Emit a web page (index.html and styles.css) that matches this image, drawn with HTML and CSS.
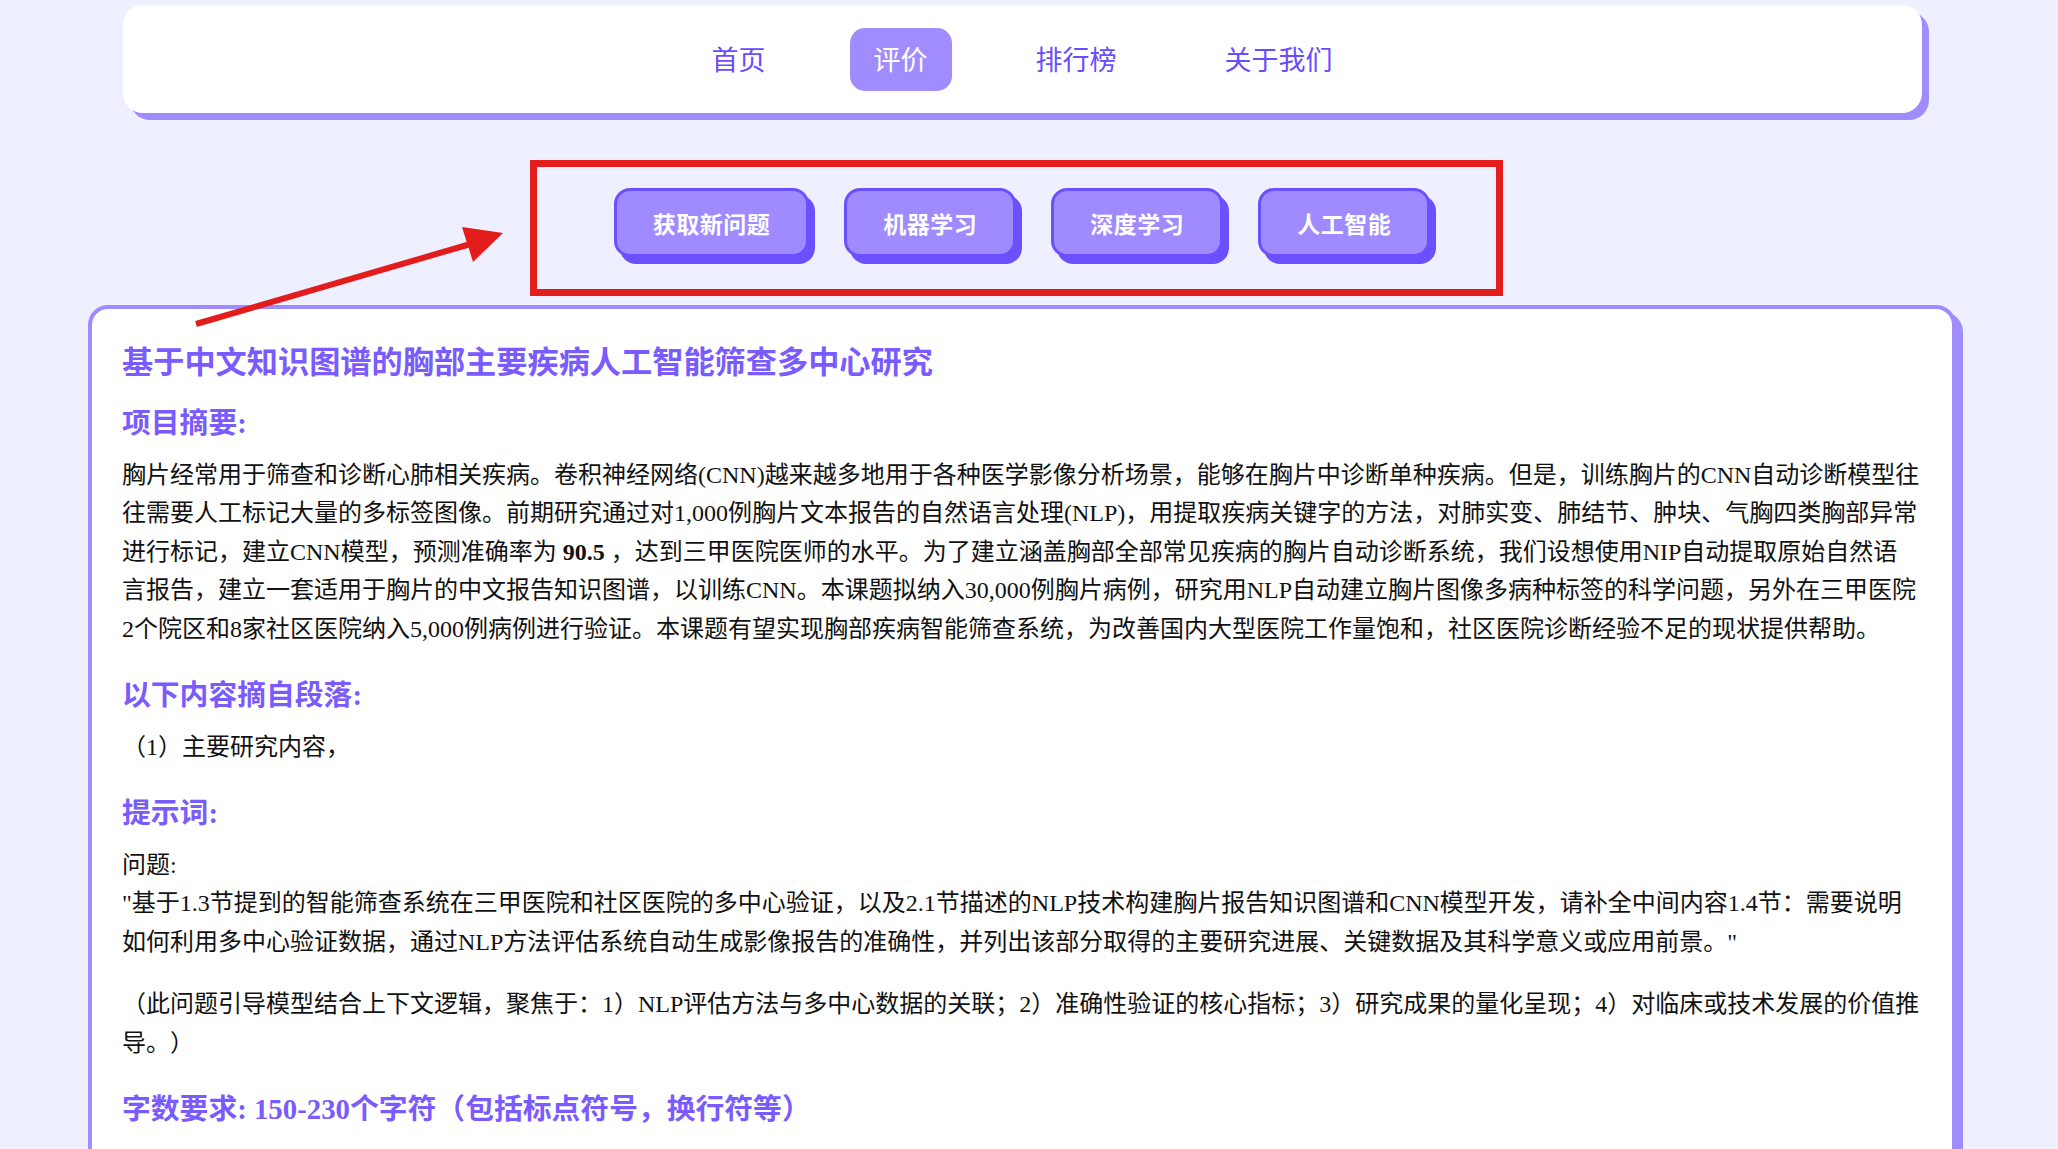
FILE: index.html
```html
<!DOCTYPE html>
<html lang="zh-CN">
<head>
<meta charset="utf-8">
<title>评价</title>
<link rel="stylesheet" href="styles.css">
</head>
<body>
<div class="page">
  <nav class="navbar">
    <a class="nav-link" href="#">首页</a>
    <a class="nav-link active" href="#">评价</a>
    <a class="nav-link" href="#">排行榜</a>
    <a class="nav-link" href="#">关于我们</a>
  </nav>

  <div class="topics">
    <button class="topic-btn">获取新问题</button>
    <button class="topic-btn">机器学习</button>
    <button class="topic-btn">深度学习</button>
    <button class="topic-btn">人工智能</button>
  </div>

  <main class="card">
    <h2 class="title">基于中文知识图谱的胸部主要疾病人工智能筛查多中心研究</h2>
    <h3 class="section first">项目摘要:</h3>
    <p class="text">胸片经常用于筛查和诊断心肺相关疾病。卷积神经网络(CNN)越来越多地用于各种医学影像分析场景，能够在胸片中诊断单种疾病。但是，训练胸片的CNN自动诊断模型往往需要人工标记大量的多标签图像。前期研究通过对1,000例胸片文本报告的自然语言处理(NLP)，用提取疾病关键字的方法，对肺实变、肺结节、肿块、气胸四类胸部异常进行标记，建立CNN模型，预测准确率为 <b>90.5</b> ，达到三甲医院医师的水平。为了建立涵盖胸部全部常见疾病的胸片自动诊断系统，我们设想使用NIP自动提取原始自然语言报告，建立一套适用于胸片的中文报告知识图谱，以训练CNN。本课题拟纳入30,000例胸片病例，研究用NLP自动建立胸片图像多病种标签的科学问题，另外在三甲医院2个院区和8家社区医院纳入5,000例病例进行验证。本课题有望实现胸部疾病智能筛查系统，为改善国内大型医院工作量饱和，社区医院诊断经验不足的现状提供帮助。</p>
    <h3 class="section">以下内容摘自段落:</h3>
    <p class="text">（1）主要研究内容，</p>
    <h3 class="section">提示词:</h3>
    <p class="text">问题:<br>"基于1.3节提到的智能筛查系统在三甲医院和社区医院的多中心验证，以及2.1节描述的NLP技术构建胸片报告知识图谱和CNN模型开发，请补全中间内容1.4节：需要说明如何利用多中心验证数据，通过NLP方法评估系统自动生成影像报告的准确性，并列出该部分取得的主要研究进展、关键数据及其科学意义或应用前景。"</p>
    <p class="text">（此问题引导模型结合上下文逻辑，聚焦于：1）NLP评估方法与多中心数据的关联；2）准确性验证的核心指标；3）研究成果的量化呈现；4）对临床或技术发展的价值推导。）</p>
    <h3 class="section">字数要求: 150-230个字符（包括标点符号，换行符等）</h3>
  </main>

  <svg class="annotation" width="2058" height="1149" viewBox="0 0 2058 1149" aria-hidden="true">
    <rect x="533.5" y="163.5" width="966" height="129" fill="none" stroke="#e31c1c" stroke-width="7"/>
    <line x1="196" y1="324" x2="474" y2="243" stroke="#e31c1c" stroke-width="6"/>
    <polygon points="503,233 462,227 473,262" fill="#e31c1c"/>
  </svg>
</div>
</body>
</html>
```

FILE: styles.css
```css
html, body {
  margin: 0;
  padding: 0;
}

body {
  background: #eff0ff;
  font-family: "Liberation Serif", "Noto Sans CJK SC", serif;
  color: #111;
  text-spacing-trim: space-all;
}

.page {
  position: relative;
  width: 2044px;
  height: 1149px;
  overflow: hidden;
  padding-top: 5px;
  box-sizing: border-box;
}

/* top navigation */
.navbar {
  width: 1799px;
  height: 108px;
  margin: 0 auto;
  background: #ffffff;
  border-radius: 20px;
  box-shadow: 7px 7px 0 #a08cff;
  display: flex;
  justify-content: center;
  align-items: center;
  gap: 60px;
}

.nav-link {
  font-size: 27px;
  line-height: 59px;
  padding: 4px 24px 0;
  color: #6a4cff;
  text-decoration: none;
  border-radius: 15px;
}

.nav-link.active {
  background: #a08cff;
  color: #ffffff;
}

/* topic buttons */
.topics {
  display: flex;
  justify-content: center;
  gap: 35px;
  margin: 75px 0 48px;
}

.topic-btn {
  height: 69px;
  box-sizing: border-box;
  padding: 0 36px;
  border: 3px solid #6c4fff;
  border-radius: 16px;
  background: #9f8bff;
  box-shadow: 6px 7px 0 #6c4fff;
  color: #ffffff;
  font-family: "Noto Sans CJK SC", sans-serif;
  font-weight: 700;
  font-size: 23px;
  letter-spacing: 0.5px;
  cursor: pointer;
}

/* content card */
.card {
  width: 1868px;
  box-sizing: border-box;
  margin: 0 auto;
  background: #ffffff;
  border: 4px solid #a08cff;
  border-radius: 20px;
  box-shadow: 7px 7px 0 #a08cff;
  padding: 34px 32px 80px 30px;
}

.title {
  margin: 0 0 21.5px;
  font-size: 31.2px;
  line-height: 40px;
  font-weight: 700;
  color: #7a5bff;
}

.section {
  margin: 28.5px 0 15px;
  font-size: 28.8px;
  line-height: 36px;
  font-weight: 700;
  color: #7a5bff;
}

.section.first {
  margin-top: 21.5px;
}

.text {
  margin: 0 0 24px;
  font-size: 24px;
  line-height: 38.5px;
  color: #111;
}

.annotation {
  position: absolute;
  left: 0;
  top: 0;
  pointer-events: none;
}
```
